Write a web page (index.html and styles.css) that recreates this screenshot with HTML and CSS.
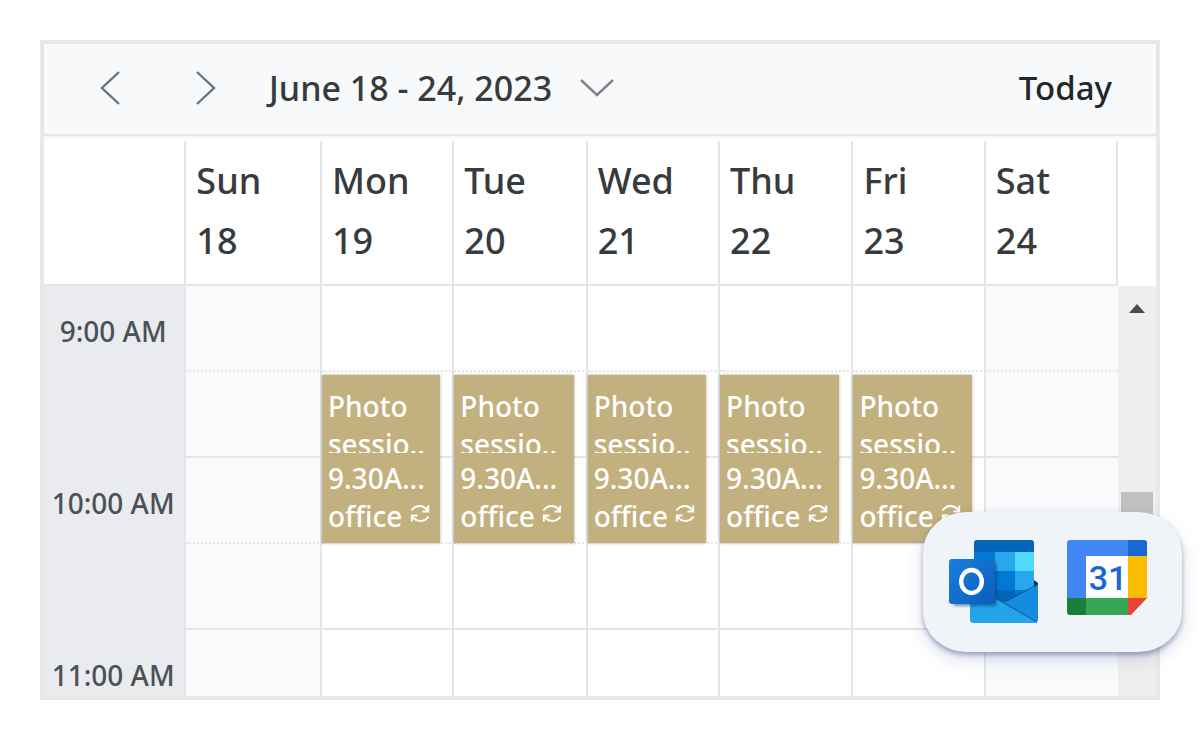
FILE: index.html
```html
<!DOCTYPE html>
<html lang="en">
<head>
<meta charset="utf-8">
<title>Calendar</title>
<link rel="stylesheet" href="styles.css">
</head>
<body>
<svg class="sprite" aria-hidden="true">
  <symbol id="repeat" viewBox="0 0 20 20">
    <path d="M1.500 6.500C5.500 0.500 13.500 0.500 17.500 6.500M18.200 1.500V7.500H12.500M18.500 12.500C14.500 18.500 6.500 18.500 2.500 12.500M1.800 17.500V11.500H7.500" fill="none" stroke="#fff" stroke-width="1.900"/>
  </symbol>
</svg>
<main class="calendar">
  <header class="toolbar">
    <button class="arrow" aria-label="Previous week"><svg width="22" height="36" viewBox="0 0 22 36"><path d="M20 2L3 18L20 34" fill="none" stroke="#64757f" stroke-width="2.400"/></svg></button>
    <button class="arrow" aria-label="Next week"><svg width="22" height="36" viewBox="0 0 22 36"><path d="M2 2L19 18L2 34" fill="none" stroke="#64757f" stroke-width="2.400"/></svg></button>
    <button class="range">June 18 - 24, 2023 <svg width="34" height="20" viewBox="0 0 34 20"><path d="M1 2L17 17L33 2" fill="none" stroke="#82868a" stroke-width="2.400"/></svg></button>
    <button class="today">Today</button>
  </header>
  <table class="week">
    <colgroup>
      <col class="col-time"><col class="col-sun"><col class="col-a"><col class="col-b"><col class="col-a"><col class="col-b"><col class="col-a"><col class="col-a"><col class="col-scroll">
    </colgroup>
    <thead>
      <tr>
        <td></td>
        <th scope="col">Sun<br>18</th>
        <th scope="col">Mon<br>19</th>
        <th scope="col">Tue<br>20</th>
        <th scope="col">Wed<br>21</th>
        <th scope="col">Thu<br>22</th>
        <th scope="col">Fri<br>23</th>
        <th scope="col">Sat<br>24</th>
        <td class="corner"></td>
      </tr>
    </thead>
    <tbody>
      <tr class="half">
        <th class="time" scope="row" rowspan="2">9:00 AM</th>
        <td class="off"></td><td></td><td></td><td></td><td></td><td></td><td class="off last"></td>
        <td class="scroll" rowspan="5"><div class="track"><span class="up"></span><span class="thumb"></span></div></td>
      </tr>
      <tr>
        <td class="off"></td>
        <td><article class="event"><h3>Photo<br>sessio..</h3><p>9.30A...<br>office <svg width="20" height="20"><use href="#repeat"/></svg></p></article></td>
        <td><article class="event"><h3>Photo<br>sessio..</h3><p>9.30A...<br>office <svg width="20" height="20"><use href="#repeat"/></svg></p></article></td>
        <td><article class="event"><h3>Photo<br>sessio..</h3><p>9.30A...<br>office <svg width="20" height="20"><use href="#repeat"/></svg></p></article></td>
        <td><article class="event"><h3>Photo<br>sessio..</h3><p>9.30A...<br>office <svg width="20" height="20"><use href="#repeat"/></svg></p></article></td>
        <td><article class="event"><h3>Photo<br>sessio..</h3><p>9.30A...<br>office <svg width="20" height="20"><use href="#repeat"/></svg></p></article></td>
        <td class="off last"></td>
      </tr>
      <tr class="half">
        <th class="time" scope="row" rowspan="2">10:00 AM</th>
        <td class="off"></td><td></td><td></td><td></td><td></td><td></td><td class="off last"></td>
      </tr>
      <tr>
        <td class="off"></td><td></td><td></td><td></td><td></td><td></td><td class="off last"></td>
      </tr>
      <tr class="cut">
        <th class="time" scope="row">11:00 AM</th>
        <td class="off"></td><td></td><td></td><td></td><td></td><td></td><td class="off last"></td>
      </tr>
    </tbody>
  </table>
  <aside class="sync">
    <svg width="90" height="84" viewBox="0 0 90 84" role="img" aria-label="Outlook">
      <defs>
        <linearGradient id="tile" x1="0" y1="0" x2="1" y2="1"><stop offset="0" stop-color="#1a80dc"/><stop offset="1" stop-color="#0a5cbc"/></linearGradient>
        <linearGradient id="flap" x1="0" y1="0" x2="0" y2="1"><stop offset="0" stop-color="#1488dc"/><stop offset="1" stop-color="#26a7ec"/></linearGradient>
        <clipPath id="book"><path d="M28 0H82Q85 0 85 3V62H25V3Q25 0 28 0Z"/></clipPath>
        <filter id="soft" x="-20%" y="-20%" width="150%" height="150%"><feGaussianBlur stdDeviation="1.500"/></filter>
      </defs>
      <g clip-path="url(#book)">
        <path d="M25 0H85V13H25Z" fill="#0364b8"/>
        <path d="M25 12H46V31H25Z" fill="#0078d4"/>
        <path d="M46 12H66V31H46Z" fill="#28a8ea"/>
        <path d="M66 12H85V31H66Z" fill="#50d9ff"/>
        <path d="M25 31H46V50H25Z" fill="#0364b8"/>
        <path d="M46 31H66V50H46Z" fill="#0078d4"/>
        <path d="M66 31H85V50H66Z" fill="#28a8ea"/>
        <path d="M25 50H85V62H25Z" fill="#14447d"/>
        <path d="M46 50H66V62H46Z" fill="#0364b8"/>
        <path d="M66 50H85V62H66Z" fill="#0078d4"/>
      </g>
      <path d="M85 40L89 43V47L85 49Z" fill="#0a2767"/>
      <path d="M89 45V79Q89 83 85 83H25Q21 83 21 79V45L55 63Z" fill="url(#flap)"/>
      <path d="M89 45L54 64L87 82Q89 81 89 79Z" fill="#168be0"/>
      <path d="M21 58V79Q21 83 25 83H85Q87 83 88 82L46 58Z" fill="#23a4e9"/>
      <path d="M46 58L88 82M54 63L89 44" stroke="#075995" stroke-width="1" fill="none"/>
      <rect x="4" y="22" width="44" height="44" rx="3" fill="#063d77" opacity=".550" filter="url(#soft)"/>
      <rect x="0" y="19" width="46" height="45" rx="3" fill="url(#tile)"/>
      <ellipse cx="22.500" cy="41.500" rx="10.300" ry="11.500" fill="none" stroke="#fff" stroke-width="4.400"/>
    </svg>
    <svg width="80" height="75" viewBox="0 0 80 75" role="img" aria-label="Google Calendar">
      <path d="M19 16H61V58H19Z" fill="#fff"/>
      <path d="M3 0H61V16H19V58H0V3Q0 0 3 0Z" fill="#4285f4"/>
      <path d="M61 0H77Q80 0 80 3V16H61Z" fill="#1967d2"/>
      <path d="M61 16H80V58H61Z" fill="#fbbc04"/>
      <path d="M19 58H61V75H19Z" fill="#34a853"/>
      <path d="M0 58H19V75H3Q0 75 0 72Z" fill="#188038"/>
      <path d="M61 58H80L64 75H61Z" fill="#ea4335"/>
      <text class="day" x="41" y="50" text-anchor="middle">31</text>
    </svg>
  </aside>
</main>
</body>
</html>
```
FILE: styles.css
```css
* { box-sizing: border-box; }

body {
  margin: 0;
  padding: 40px;
  background: #fff;
  color: #373b3e;
  font-family: "Noto Sans", "Open Sans", sans-serif;
  font-weight: 500;
}

.sprite { position: absolute; width: 0; height: 0; }

.calendar {
  position: relative;
  border: 4px solid #e9e9e9;
  background: #fff;
}

.toolbar {
  display: flex;
  align-items: center;
  height: 92px;
  margin-bottom: 5px;
  padding: 0 44px 2px 55px;
  background: #f8f9fb;
  border-bottom: 2px solid #e4e6e8;
  box-shadow: 0 1px 4px rgba(0, 0, 0, 0.08);
}

button {
  display: flex;
  align-items: center;
  padding: 0;
  border: 0;
  background: none;
  color: inherit;
  font: inherit;
  cursor: pointer;
}

.arrow { margin-right: 74px; }
.arrow + .arrow { margin-right: 52px; }
.range { gap: 28px; font-size: 34px; line-height: 46px; }
.today { margin-left: auto; color: #222629; font-size: 33px; line-height: 46px; }

.week {
  width: 100%;
  table-layout: fixed;
  border-collapse: separate;
  border-spacing: 0;
}

.col-time { width: 12.8%; }
.col-sun { width: 12.2%; }
.col-a { width: 11.9%; }
.col-b { width: 12%; }
.col-scroll { width: 3.4%; }

.week td, .week th {
  padding: 0;
  border: 0 solid #e4e6e8;
  border-width: 0 2px 2px 0;
  font-weight: 500;
  text-align: left;
  vertical-align: top;
}

.week thead th, .week thead td {
  height: 145px;
  padding: 10px;
  font-size: 36px;
  line-height: 60px;
}

.week thead .corner { border-width: 0; }

.week tbody td { position: relative; height: 86px; }
.week tbody .half td { border-bottom-style: dotted; }
.week tbody .off { background: #f9fafc; }
.week tbody .last { border-right-width: 0; }
.week tbody .cut td { height: 66px; border-bottom-width: 0; }

.week tbody .time {
  padding-top: 26px;
  padding-right: 2px;
  border-bottom-width: 0;
  background: #e9ebee;
  color: #4b5156;
  font-size: 28px;
  line-height: 38px;
  text-align: center;
}

.week tbody .scroll { height: 100%; border-width: 0; background: #efefef; }

.track {
  display: flex;
  flex-direction: column;
  align-items: center;
  padding-top: 18px;
}

.up {
  border: 8px solid transparent;
  border-top-width: 0;
  border-bottom: 9px solid #4d4d4d;
}

.thumb { width: 32px; height: 60px; margin-top: 179px; background: #c1c1c1; }

.event {
  position: absolute;
  z-index: 1;
  top: 3px;
  left: 0;
  right: 12px;
  padding: 12px 0 8px 6px;
  overflow: hidden;
  background: #c2b07e;
  box-shadow: 0 0 3px rgba(70, 70, 70, 0.4);
  color: #fff;
  font-size: 28px;
  line-height: 38px;
  white-space: nowrap;
}

.event h3 {
  height: 66px;
  margin: 0 0 6px;
  overflow: hidden;
  font: inherit;
}

.event p { height: 76px; margin: 0; }
.event svg { vertical-align: 3px; }

.sync {
  position: absolute;
  z-index: 2;
  right: -26px;
  bottom: 44px;
  display: flex;
  gap: 28px;
  padding: 28px 35px 28px 26px;
  border-radius: 44px / 40px;
  background: #f0f4f9;
  box-shadow: 0 3px 5px rgba(40, 55, 110, 0.4), 0 8px 18px rgba(60, 75, 160, 0.16);
}

.day { fill: #1967d2; font-family: Roboto, sans-serif; font-size: 34px; font-weight: 500; }
```
